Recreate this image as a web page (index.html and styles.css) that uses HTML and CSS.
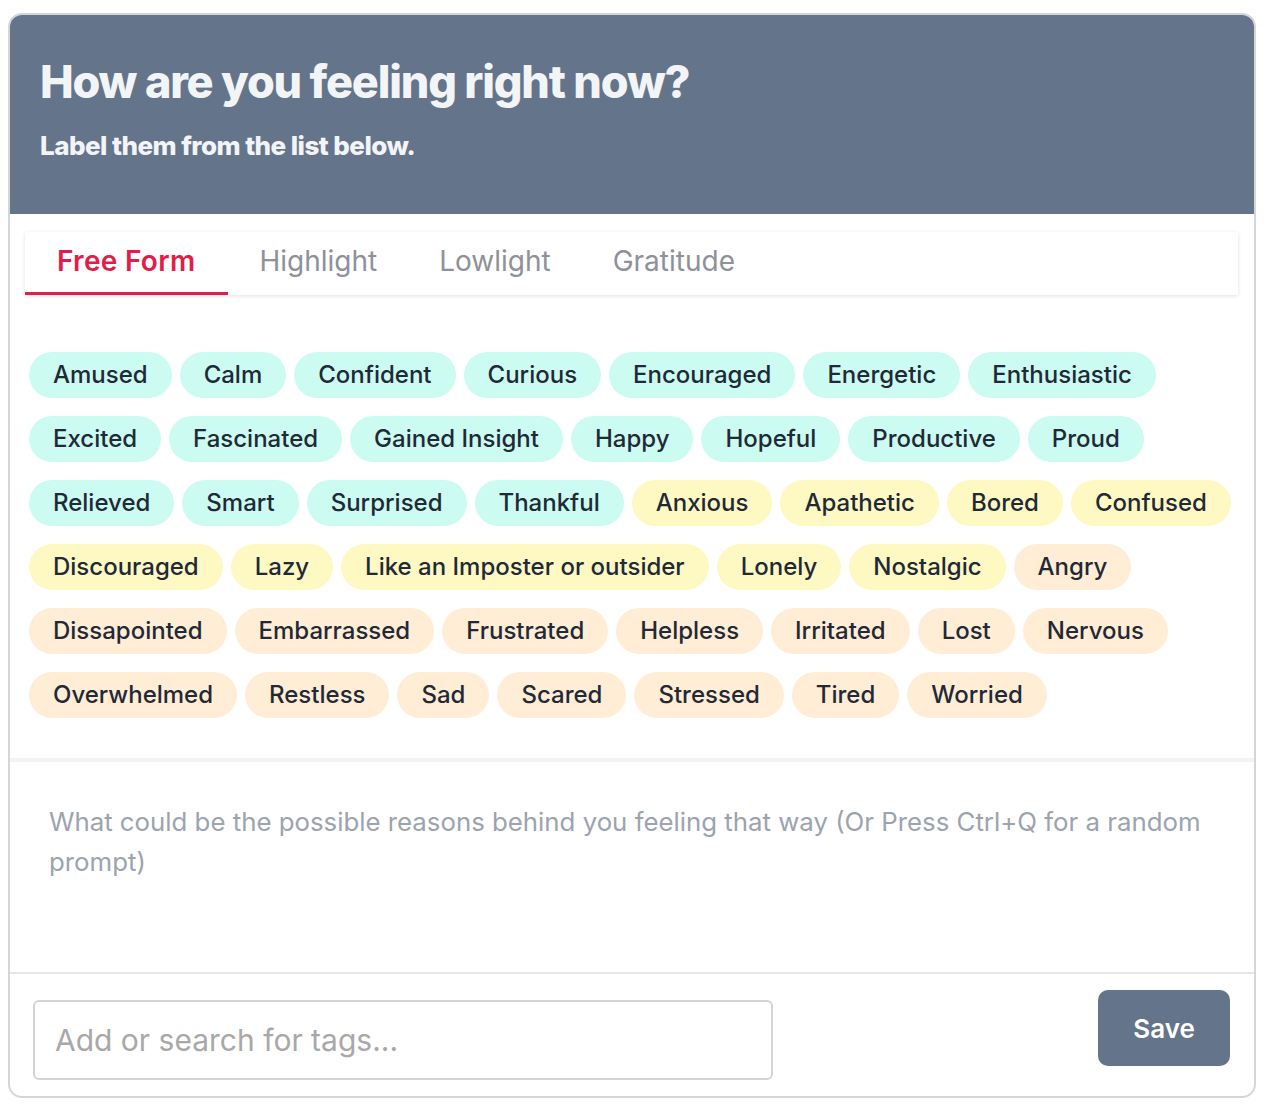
FILE: index.html
```html
<!DOCTYPE html>
<html lang="en">
<head>
<meta charset="utf-8">
<title>How are you feeling right now?</title>
<link rel="stylesheet" href="styles.css">
</head>
<body>
<div class="card">
  <header class="hero">
    <h1 class="title">How are you feeling right now?</h1>
    <p class="subtitle">Label them from the list below.</p>
  </header>
  <div class="tabs-wrap">
    <nav class="tabs">
      <span class="tab active">Free Form</span>
      <span class="tab">Highlight</span>
      <span class="tab">Lowlight</span>
      <span class="tab">Gratitude</span>
    </nav>
  </div>
  <div class="tags">
    <span class="tag pos">Amused</span>
    <span class="tag pos">Calm</span>
    <span class="tag pos">Confident</span>
    <span class="tag pos">Curious</span>
    <span class="tag pos">Encouraged</span>
    <span class="tag pos">Energetic</span>
    <span class="tag pos">Enthusiastic</span>
    <span class="tag pos">Excited</span>
    <span class="tag pos">Fascinated</span>
    <span class="tag pos">Gained Insight</span>
    <span class="tag pos">Happy</span>
    <span class="tag pos">Hopeful</span>
    <span class="tag pos">Productive</span>
    <span class="tag pos">Proud</span>
    <span class="tag pos">Relieved</span>
    <span class="tag pos">Smart</span>
    <span class="tag pos">Surprised</span>
    <span class="tag pos">Thankful</span>
    <span class="tag mid">Anxious</span>
    <span class="tag mid">Apathetic</span>
    <span class="tag mid">Bored</span>
    <span class="tag mid">Confused</span>
    <span class="tag mid">Discouraged</span>
    <span class="tag mid">Lazy</span>
    <span class="tag mid">Like an Imposter or outsider</span>
    <span class="tag mid">Lonely</span>
    <span class="tag mid">Nostalgic</span>
    <span class="tag neg">Angry</span>
    <span class="tag neg">Dissapointed</span>
    <span class="tag neg">Embarrassed</span>
    <span class="tag neg">Frustrated</span>
    <span class="tag neg">Helpless</span>
    <span class="tag neg">Irritated</span>
    <span class="tag neg">Lost</span>
    <span class="tag neg">Nervous</span>
    <span class="tag neg">Overwhelmed</span>
    <span class="tag neg">Restless</span>
    <span class="tag neg">Sad</span>
    <span class="tag neg">Scared</span>
    <span class="tag neg">Stressed</span>
    <span class="tag neg">Tired</span>
    <span class="tag neg">Worried</span>
  </div>
  <div class="entry">
    <textarea class="entry-text" placeholder="What could be the possible reasons behind you feeling that way (Or Press Ctrl+Q for a random prompt)"></textarea>
  </div>
  <footer class="footer">
    <input class="tag-input" type="text" placeholder="Add or search for tags...">
    <button class="save">Save</button>
  </footer>
</div>
</body>
</html>
```

FILE: styles.css
```css
* { box-sizing: border-box; }

body {
  margin: 0;
  padding: 13px 12px 0 8px;
  background: #ffffff;
  font-family: Inter, "Noto Sans", sans-serif;
}

.card {
  width: 1248px;
  height: 1085px;
  border: 2px solid #d4d6dc;
  border-radius: 14px;
  overflow: hidden;
  display: flex;
  flex-direction: column;
  background: #ffffff;
}

.hero {
  background: #64748b;
  height: 199px;
  padding: 40px 30px 0 30px;
  flex: none;
}

.title {
  margin: 0;
  font-family: Inter, sans-serif;
  font-weight: 800;
  font-size: 45px;
  line-height: 54px;
  letter-spacing: -1.2px;
  color: #f3f4f6;
}

.subtitle {
  margin: 21px 0 0 0;
  font-family: Inter, sans-serif;
  font-weight: 800;
  font-size: 26px;
  line-height: 32px;
  letter-spacing: -0.55px;
  color: #f3f4f6;
}

.tabs-wrap {
  padding: 18px 16px 0 15px;
  flex: none;
}

.tabs {
  display: flex;
  height: 63px;
  background: #ffffff;
  box-shadow: 0 1px 4px rgba(0, 0, 0, 0.12);
}

.tab {
  padding: 0 31px;
  font-size: 28px;
  line-height: 58px;
  font-weight: 400;
  color: #8e9199;
  border-bottom: 3px solid transparent;
}

.tab.active {
  padding: 0 33px 0 32px;
  color: #e11d48;
  font-weight: 600;
  letter-spacing: 0.3px;
  border-bottom-color: #e11d48;
}

.tags {
  display: flex;
  flex-wrap: wrap;
  gap: 18px 8px;
  padding: 57px 19px 40px 19px;
  border-bottom: 4px solid #f3f4f6;
  flex: none;
}

.tag {
  height: 46px;
  padding: 0 24px;
  border-radius: 23px;
  font-size: 24px;
  font-weight: 500;
  line-height: 46px;
  color: #1f2937;
  white-space: nowrap;
}

.tag.pos { background: #ccfbf1; }
.tag.mid { background: #fef9c3; }
.tag.neg { background: #ffedd5; }

.entry {
  height: 212px;
  border-bottom: 2px solid #e5e7eb;
  flex: none;
}

.entry-text {
  display: block;
  width: 100%;
  height: 100%;
  border: none;
  outline: none;
  resize: none;
  padding: 40px 30px 0 39px;
  font-family: Inter, sans-serif;
  font-size: 25.8px;
  line-height: 40px;
  color: #374151;
  background: transparent;
}

.entry-text::placeholder { color: #9ca3af; }

.footer {
  flex: 1;
  display: flex;
  justify-content: space-between;
  align-items: flex-start;
  padding: 16px 24px 0 23px;
}

.tag-input {
  margin-top: 10px;
  width: 740px;
  height: 80px;
  border: 2px solid #d4d4d4;
  border-radius: 6px;
  padding: 0 20px;
  font-family: Inter, sans-serif;
  font-size: 30px;
  color: #374151;
  outline: none;
}

.tag-input::placeholder { color: #a8a8a8; }

.save {
  width: 132px;
  height: 76px;
  border: none;
  border-radius: 10px;
  background: #64748b;
  color: #ffffff;
  font-family: Inter, sans-serif;
  font-size: 26px;
  font-weight: 600;
}
```
